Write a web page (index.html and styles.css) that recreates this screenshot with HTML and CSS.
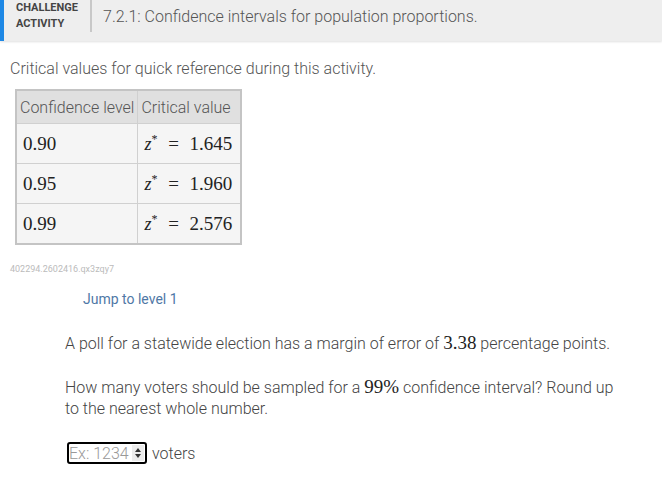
FILE: index.html
```html
<!DOCTYPE html>
<html>
<head>
<meta charset="utf-8">
<link rel="stylesheet" href="styles.css">
</head>
<body>
<div class="header">
  <div class="label">CHALLENGE<br>ACTIVITY</div>
  <div class="title">7.2.1: Confidence intervals for population proportions.</div>
</div>
<div class="content">
  <p class="intro">Critical values for quick reference during this activity.</p>
  <table class="ref">
    <tr><th>Confidence level</th><th>Critical value</th></tr>
    <tr><td class="m">0.90</td><td class="m r"><i>z</i><sup>*</sup> <span class="eq">=</span> 1.645</td></tr>
    <tr><td class="m">0.95</td><td class="m r"><i>z</i><sup>*</sup> <span class="eq">=</span> 1.960</td></tr>
    <tr><td class="m">0.99</td><td class="m r"><i>z</i><sup>*</sup> <span class="eq">=</span> 2.576</td></tr>
  </table>
  <div class="code">402294.2602416.qx3zqy7</div>
  <div class="jump">Jump to level 1</div>
  <div class="question">
    <p>A poll for a statewide election has a margin of error of <span class="mm">3.38</span> percentage points.</p>
    <p>How many voters should be sampled for a <span class="mm">99%</span> confidence interval? Round up to the nearest whole number.</p>
    <div class="answer">
      <div class="field">
        <input type="text" placeholder="Ex: 1234" class="num">
        <span class="spin"><span class="up"></span><span class="down"></span></span>
      </div>
      <span>voters</span>
    </div>
  </div>
</div>
</body>
</html>
```
FILE: styles.css
```css
html, body { margin: 0; padding: 0; background: #fff; }
body { font-family: Roboto, "Noto Sans", sans-serif; color: #5b5b5b; }
.header {
  display: flex; align-items: flex-start;
  background: #eeeeee; height: 41px;
  border-left: 4px solid #1e88e5;
  box-shadow: 0 1px 2px rgba(0,0,0,0.12);
}
.label {
  font-size: 11px; font-weight: 700; color: #444; line-height: 16px;
  padding: 0 12px 0 12px; margin-top: 0;
  border-right: 2px solid #c8c8c8; height: 32px; box-sizing: border-box;
}
.title { font-size: 16px; font-weight: 300; color: #555; padding: 7px 0 0 11px; }
.content { padding: 0 10px; }
.intro { font-size: 16px; font-weight: 300; color: #555; margin: 18px 0 11px 0; }
.ref { border-collapse: collapse; margin-left: 5px; border: 2px solid #c4c4c4; background: #f5f5f5; }
.ref th { background: #e0e0e0; font-weight: 300; font-size: 16px; color: #555; height: 32px; padding: 0 3px; border: 1px solid #d0d0d0; text-align: left; }
.ref td { height: 39px; border: 1px solid #d0d0d0; padding: 0 6px; }
.m { font-family: "Liberation Serif", "DejaVu Serif", serif; font-size: 19px; color: #222; }
.r { text-align: right; padding-right: 8px !important; }
.m i { font-size: 18px; }
.m sup { font-size: 12px; }
.eq { padding: 0 6px; }
.code { font-size: 9px; color: #bbb; margin-top: 19px; }
.jump { font-size: 14px; color: #4f78a6; margin: 17px 0 0 73px; }
.question { margin: 26px 0 0 55px; width: 555px; font-size: 16px; font-weight: 300; color: #444; line-height: 21px; }
.question p { margin: 0 0 23px 0; }
.mm { font-family: "Liberation Serif", "DejaVu Serif", serif; font-size: 19px; font-weight: 400; color: #222; line-height: 1; }
.answer { margin-top: 6px; display: flex; align-items: center; gap: 5px; }
.field { position: relative; width: 80px; height: 22px; margin-left: 2px; }
.num { width: 80px; height: 22px; box-sizing: border-box; border: 2px solid #000; border-radius: 3px; font-family: Roboto, sans-serif; font-size: 16px; font-weight: 300; padding: 0; margin: 0; outline: none; background: #fff; }
.num::placeholder { color: #999; }
.spin { position: absolute; right: 3px; top: 3px; width: 12px; height: 16px; background: #ececec; display: flex; flex-direction: column; align-items: center; justify-content: center; gap: 2px; }
.up { width: 0; height: 0; border-left: 3.5px solid transparent; border-right: 3.5px solid transparent; border-bottom: 4px solid #333; }
.down { width: 0; height: 0; border-left: 3.5px solid transparent; border-right: 3.5px solid transparent; border-top: 4px solid #333; }
```
